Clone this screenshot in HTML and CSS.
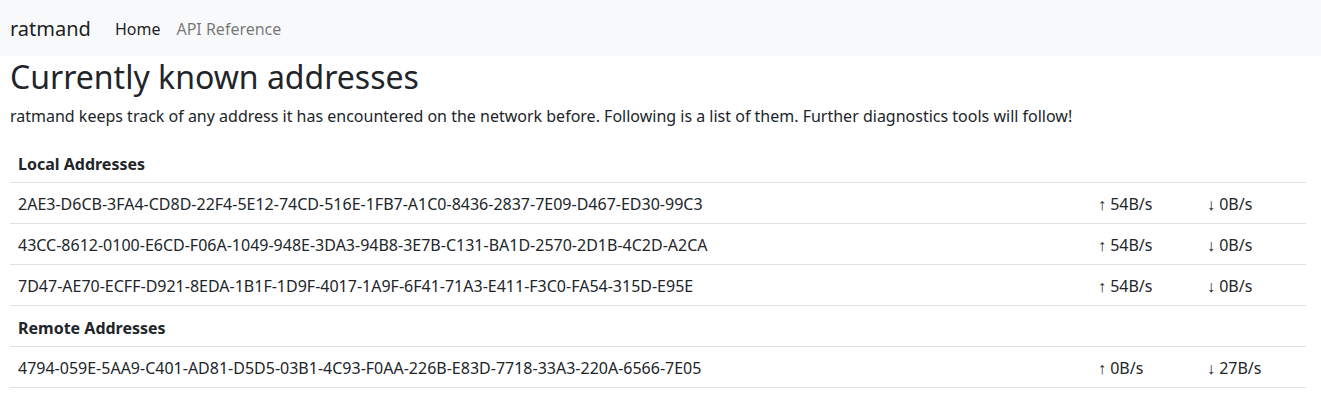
FILE: index.html
```html
<!DOCTYPE html>
<html lang="en">
<head>
<meta charset="utf-8">
<title>ratmand</title>
<link rel="stylesheet" href="styles.css">
</head>
<body>
<nav class="navbar">
  <a class="brand" href="#">ratmand</a>
  <ul class="nav">
    <li><a class="nav-link active" href="#">Home</a></li>
    <li><a class="nav-link" href="#">API Reference</a></li>
  </ul>
</nav>
<main class="content">
  <h1 class="title">Currently known addresses</h1>
  <p class="lead">ratmand keeps track of any address it has encountered on the network before. Following is a list of them. Further diagnostics tools will follow!</p>
  <table class="table">
    <tbody>
      <tr class="section"><th colspan="3">Local Addresses</th></tr>
      <tr><td class="addr">2AE3-D6CB-3FA4-CD8D-22F4-5E12-74CD-516E-1FB7-A1C0-8436-2837-7E09-D467-ED30-99C3</td><td class="rate up">↑ 54B/s</td><td class="rate down">↓ 0B/s</td></tr>
      <tr><td class="addr">43CC-8612-0100-E6CD-F06A-1049-948E-3DA3-94B8-3E7B-C131-BA1D-2570-2D1B-4C2D-A2CA</td><td class="rate up">↑ 54B/s</td><td class="rate down">↓ 0B/s</td></tr>
      <tr><td class="addr">7D47-AE70-ECFF-D921-8EDA-1B1F-1D9F-4017-1A9F-6F41-71A3-E411-F3C0-FA54-315D-E95E</td><td class="rate up">↑ 54B/s</td><td class="rate down">↓ 0B/s</td></tr>
      <tr class="section"><th colspan="3">Remote Addresses</th></tr>
      <tr><td class="addr">4794-059E-5AA9-C401-AD81-D5D5-03B1-4C93-F0AA-226B-E83D-7718-33A3-220A-6566-7E05</td><td class="rate up">↑ 0B/s</td><td class="rate down">↓ 27B/s</td></tr>
    </tbody>
  </table>
</main>
</body>
</html>
```
FILE: styles.css
```css
* { box-sizing: border-box; }
html, body { margin: 0; padding: 0; }
body {
  font-family: "Noto Sans", "Open Sans", sans-serif;
  font-size: 16px;
  line-height: 1.5;
  color: #212529;
  background: #fff;
}
a { text-decoration: none; }
.navbar {
  display: flex;
  align-items: center;
  height: 56px;
  padding: 2px 10px 0;
  background: #f8f9fa;
}
.brand {
  font-size: 20px;
  color: rgba(0,0,0,.9);
  margin-right: 16px;
  line-height: 30px;
}
.nav {
  display: flex;
  list-style: none;
  margin: 0;
  padding: 0;
}
.nav-link {
  display: block;
  padding: 8px;
  color: rgba(0,0,0,.55);
}
.nav-link.active { color: rgba(0,0,0,.9); }
.content {
  padding: 0 15px 0 10px;
}
.title {
  margin: 2px 0 8px;
  font-size: 32px;
  font-weight: 400;
  line-height: 1.2;
}
.lead {
  margin: 0 0 14px;
}
.table {
  width: 100%;
  border-collapse: collapse;
}
.table th, .table td {
  text-align: left;
  border-bottom: 1px solid #dee2e6;
}
.table td { padding: 9px 8px 7px; }
.table th { padding: 10px 8px 6px; font-weight: 700; }
.rate.up { width: 109px; }
.rate.down { width: 107px; }
```
